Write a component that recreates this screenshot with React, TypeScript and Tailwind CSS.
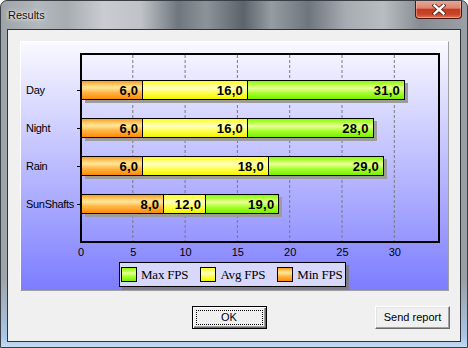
import React from "react";

const rows = [
  { name: "Day", min: 6, avg: 16, max: 31 },
  { name: "Night", min: 6, avg: 16, max: 28 },
  { name: "Rain", min: 6, avg: 18, max: 29 },
  { name: "SunShafts", min: 8, avg: 12, max: 19 },
];

const UNIT = 10.47;
// absolute x (page) where a segment ending at value v stops
const end = (v: number) => 80.5 + v * UNIT;
const START = 82;

const fmt = (v: number) => v.toFixed(1).replace(".", ",");

const orange =
  "bg-[linear-gradient(to_bottom,#ff9a18_0%,#ffd070_22%,#ffe79a_38%,#ffb848_62%,#ff8a08_100%)]";
const yellow =
  "bg-[linear-gradient(to_bottom,#ffff10_0%,#ffff90_25%,#ffffc0_40%,#ffff50_65%,#f4f400_100%)]";
const green =
  "bg-[linear-gradient(to_bottom,#80ff00_0%,#c0ff50_22%,#eaff98_40%,#a8ff30_65%,#78f000_100%)]";

const Segment = ({ width, value, color }: { width: number; value: number; color: string }) => (
  <div
    className={`h-full border-r border-black flex items-center justify-end pr-[4px] ${color}`}
    style={{ width }}
  >
    <span className="font-['Liberation_Sans',Arial,sans-serif] font-bold text-[13px] leading-none tracking-[0.25px] text-black">
      {fmt(value)}
    </span>
  </div>
);

const Swatch = ({ color }: { color: string }) => (
  <div className={`w-[16px] h-[15px] border border-black ${color}`} />
);

export default function App() {
  const ticks = [0, 5, 10, 15, 20, 25, 30];
  return (
    <div className="w-[468px] h-[348px] flex flex-col rounded-t-[7px] border border-[#3a3f45] overflow-hidden bg-[linear-gradient(to_bottom,transparent_0%,transparent_80%,#a9c6e6_97%,#c4dcf2_100%),linear-gradient(to_right,#9ea3a8_0%,#b3b8bd_8%,#a7acb1_14%,#c9cdd1_22%,#bfc3c7_30%,#6f767d_38%,#8c9399_44%,#5c636a_52%,#959ca2_58%,#6e757c_66%,#a6acb1_74%,#b8bdc1_82%,#878d93_90%,#9aa0a5_100%)] font-['Liberation_Sans',Arial,sans-serif]">
      {/* title bar */}
      <div className="h-[28px] flex items-start pl-[7px] pr-[5px]">
        <div className="pt-[7px] leading-[14px] text-[11px] text-[#111] [text-shadow:0_0_6px_rgba(255,255,255,0.9),0_0_3px_rgba(255,255,255,0.9)]">
          Results
        </div>
        <div className="ml-auto -mt-px w-[47px] h-[19px] rounded-b-[4px] border border-[#4a1a12] border-t-0 flex items-center justify-center bg-[linear-gradient(to_bottom,#e9ab9c_0%,#de8470_45%,#c43b1f_52%,#c9452a_80%,#e07a5c_100%)] shadow-[inset_0_0_0_1px_rgba(255,200,190,0.45)]">
          <svg width="14" height="11" viewBox="0 0 14 11">
            <path d="M2.5 1.5 L11.5 9.5 M11.5 1.5 L2.5 9.5" stroke="#5a2418" strokeWidth="4.2" strokeLinecap="square" />
            <path d="M2.5 1.5 L11.5 9.5 M11.5 1.5 L2.5 9.5" stroke="#ffffff" strokeWidth="2.4" strokeLinecap="square" />
          </svg>
        </div>
      </div>

      {/* client area */}
      <div className="flex-1 px-[6px] pb-[5px] flex flex-col">
        <div className="flex-1 border border-[#2f3439] bg-[#f0f0f0] flex flex-col">
          {/* chart panel */}
          <div className="ml-[12px] mt-[11px] w-[429px] h-[250px] border border-t-white border-l-white border-r-[#a0a0a0] border-b-[#a0a0a0] bg-[linear-gradient(to_bottom,#fafaff_0%,#7d7dff_100%)] flex flex-col pt-[11px]">
            <div className="flex">
              {/* row labels */}
              <div className="w-[59px] flex flex-col gap-[18px] pt-[27px]">
                {rows.map((r) => (
                  <div key={r.name} className="h-[20px] flex items-center pl-[5px]">
                    <span className="text-[11px] tracking-[-0.3px] text-black">{r.name}</span>
                    <div className="ml-auto w-[3px] h-px bg-black" />
                  </div>
                ))}
              </div>
              {/* plot */}
              <div className="relative w-[360px] h-[190px] border-2 border-black">
                <svg className="absolute inset-0" width="356" height="186">
                  {[1, 2, 3, 4, 5, 6].map((k) => (
                    <line
                      key={k}
                      x1={52.3 * k - 1.5}
                      x2={52.3 * k - 1.5}
                      y1="0"
                      y2="186"
                      stroke="#7a7a7a"
                      strokeWidth="1"
                      strokeDasharray="3 2"
                    />
                  ))}
                </svg>
                <div className="relative flex flex-col gap-[18px] pt-[25px]">
                  {rows.map((r) => (
                    <div
                      key={r.name}
                      className="h-[20px] flex border-y border-black shadow-[3px_3px_0_#9c9c9c]"
                      style={{ width: end(r.max) - START }}
                    >
                      <Segment width={end(r.min) - START} value={r.min} color={orange} />
                      <Segment width={end(r.avg) - end(r.min)} value={r.avg} color={yellow} />
                      <Segment width={end(r.max) - end(r.avg)} value={r.max} color={green} />
                    </div>
                  ))}
                </div>
              </div>
            </div>

            {/* x axis labels */}
            <div className="flex ml-[33.85px] mt-[3px]">
              {ticks.map((t) => (
                <div key={t} className="w-[52.3px] text-center text-[11px] leading-[13px] text-black">
                  {t}
                </div>
              ))}
            </div>

            {/* legend */}
            <div className="ml-[98px] mt-[3px] w-[227px] h-[25px] border border-black bg-[#d8d8fc] shadow-[3px_3px_0_#7c7c8c] flex items-center pl-px gap-[12px] font-['Liberation_Serif','Times_New_Roman',serif] text-[13px] tracking-[-0.2px] text-black">
              <div className="flex items-center gap-[4px]">
                <Swatch color={green} />
                <span>Max FPS</span>
              </div>
              <div className="flex items-center gap-[4px]">
                <Swatch color={yellow} />
                <span>Avg FPS</span>
              </div>
              <div className="flex items-center gap-[4px]">
                <Swatch color={orange} />
                <span>Min FPS</span>
              </div>
            </div>
          </div>

          {/* buttons */}
          <div className="flex mt-[15px]">
            <div className="flex-1" />
            <button className="relative w-[75px] h-[23px] border border-black bg-[#f0f0f0] shadow-[inset_1px_1px_0_#ffffff,inset_-1px_-1px_0_#696969,inset_-2px_-2px_0_#a0a0a0] text-[11px] text-black">
              <span className="absolute inset-[3px] border border-dotted border-black" />
              OK
            </button>
            <div className="flex-1 flex justify-end pr-[10px]">
              <button className="w-[75px] h-[23px] border border-t-white border-l-white border-r-[#696969] border-b-[#696969] bg-[#f0f0f0] shadow-[inset_-1px_-1px_0_#a0a0a0,inset_1px_1px_0_#e3e3e3] text-[11px] text-black">
                Send report
              </button>
            </div>
          </div>
        </div>
      </div>
    </div>
  );
}
